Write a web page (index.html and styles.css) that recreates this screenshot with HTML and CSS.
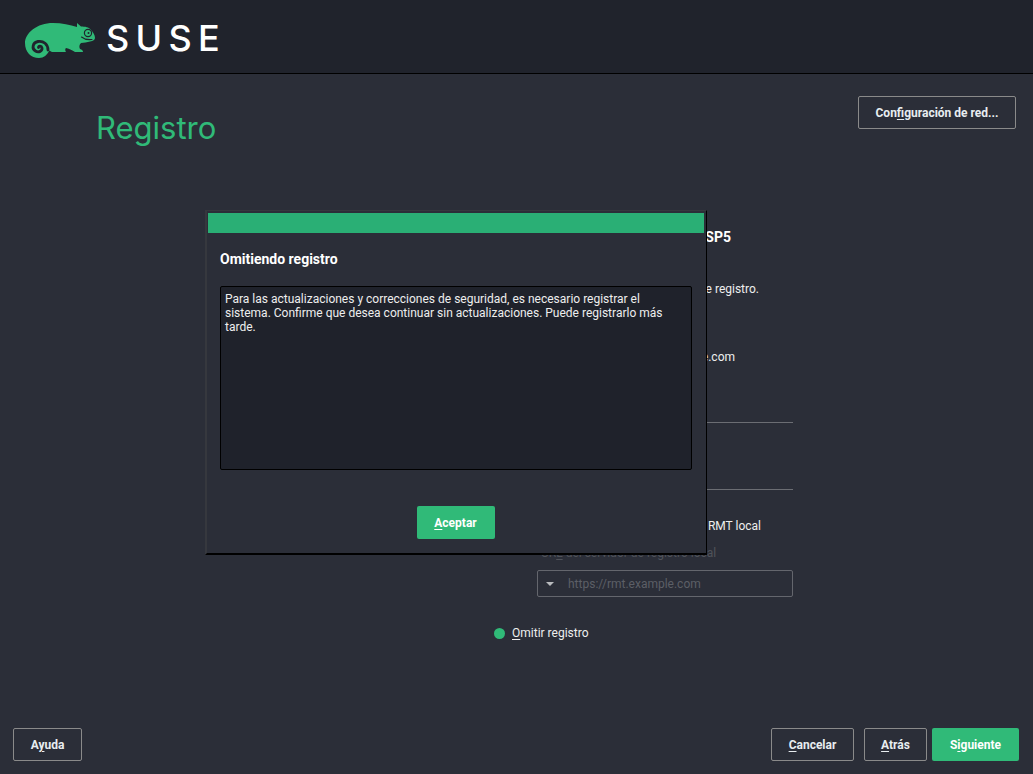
FILE: index.html
```html
<!DOCTYPE html>
<html lang="es">
<head>
<meta charset="utf-8">
<title>Registro</title>
<link rel="stylesheet" href="styles.css">
</head>
<body>
<header class="topbar">
  <svg class="logo" width="72" height="37" viewBox="25 22 72 37" aria-hidden="true">
    <path class="logo-body" d="M25 43C25 33 37 23 53 23C62 23 70 25 77 27L77 23L81 26.5C85 26.5 89 27 91 30C93 32 95 35 95 38C95 40 93 41 90 41.5C87 42.5 84 42.5 81 43C79 45 79 47 80 49C82 49.5 83 50.5 83 52L75 52C72 50.5 70 48.5 66 48C65 49 65 50.5 66 52L52 52C51 51.5 50 51 49.5 50.5C47 55 44 58 39 58C31 58 25 52 25 43Z"/>
    <path class="logo-cut" d="M38.5 47.5C38.5 45.5 41.5 45.5 42 48C42.5 51 38.5 53 35.5 51C31.5 48.5 32.5 42.5 38 41.5C43.5 40.5 48 44.5 48 50"/>
    <circle class="logo-eye" cx="88" cy="33" r="3.6"/>
    <circle class="logo-pupil" cx="88.5" cy="33" r="1"/>
    <path class="logo-mouth" d="M81.5 37C84 39 88 40 92 39.5"/>
  </svg>
  <span class="wordmark">SUSE</span>
</header>

<main class="content">
  <div class="title-row">
    <h1 class="title">Registro</h1>
    <button class="btn btn-outline btn-network">Con<u>f</u>iguración de red...</button>
  </div>
  <section class="form">
    <h2 class="product">SUSE Linux Enterprise Server 15 SP5</h2>
    <p class="line line-method">Código de registro.</p>
    <p class="line line-mail">correo@example.com</p>
    <hr class="rule rule-first">
    <hr class="rule rule-second">
    <p class="line line-rmt">Registrar el sistema mediante servidor RMT local</p>
    <label class="url-label">UR<u>L</u> del servidor de registro local</label>
    <div class="combo">
      <span class="combo-arrow"></span>
      <span class="combo-text">https://rmt.example.com</span>
    </div>
    <div class="skip">
      <span class="radio"></span>
      <span class="skip-text"><u>O</u>mitir registro</span>
    </div>
  </section>
</main>

<footer class="footer">
  <button class="btn btn-outline btn-help">A<u>y</u>uda</button>
  <div class="footer-right">
    <button class="btn btn-outline btn-cancel"><u>C</u>ancelar</button>
    <button class="btn btn-outline btn-back"><u>A</u>trás</button>
    <button class="btn btn-primary btn-next">S<u>i</u>guiente</button>
  </div>
</footer>

<div class="dialog" role="dialog">
  <div class="dialog-bar"></div>
  <h3 class="dialog-title">Omitiendo registro</h3>
  <div class="dialog-text">Para las actualizaciones y correcciones de seguridad, es necesario registrar el sistema. Confirme que desea continuar sin actualizaciones. Puede registrarlo más tarde.</div>
  <div class="dialog-actions">
    <button class="btn btn-primary btn-ok"><u>A</u>ceptar</button>
  </div>
</div>
</body>
</html>
```

FILE: styles.css
```css
* { box-sizing: border-box; }
html, body { height: 100%; }
body {
  margin: 0;
  height: 774px;
  overflow: hidden;
  position: relative;
  display: flex;
  flex-direction: column;
  background: #2b2e38;
  color: #eeeeee;
  font-family: Roboto, "Liberation Sans", sans-serif;
  font-size: 12px;
}
u { text-underline-offset: 2px; text-decoration-thickness: 1px; }

.topbar {
  height: 74px;
  flex: none;
  display: flex;
  align-items: flex-start;
  background: #20232c;
  border-bottom: 1px solid #000;
  padding: 22px 0 0 25px;
}
.logo { display: block; }
.logo-body { fill: #30ba78; }
.logo-cut { fill: none; stroke: #20232c; stroke-width: 2.8; stroke-linecap: round; }
.logo-eye { fill: #30ba78; stroke: #20232c; stroke-width: 1.2; }
.logo-pupil { fill: #20232c; }
.logo-mouth { fill: none; stroke: #20232c; stroke-width: 1.1; stroke-linecap: round; }
.wordmark {
  margin: -6px 0 0 9px;
  font-family: Inter, sans-serif;
  font-weight: 500;
  font-size: 36px;
  line-height: 44px;
  letter-spacing: 6.3px;
  color: #fff;
}

.content { flex: 1; min-height: 0; display: flex; flex-direction: column; }
.title-row {
  display: flex;
  justify-content: space-between;
  align-items: flex-start;
  padding: 22px 17px 0 96px;
}
.title {
  margin: 12px 0 0;
  font-family: Inter, sans-serif;
  font-weight: 400;
  font-size: 31px;
  line-height: 40px;
  color: #30ba78;
}

.btn {
  height: 33px;
  padding: 0;
  border-radius: 2px;
  font-family: Roboto, "Liberation Sans", sans-serif;
  font-size: 12px;
  font-weight: 700;
  cursor: pointer;
}
.btn-outline { background: transparent; border: 1px solid #8a8a8a; color: #e8edf0; }
.btn-primary { background: #30ba78; border: 0; color: #fff; }
.btn-network { width: 158px; }
.btn-help { width: 69px; }
.btn-cancel { width: 83px; margin-right: 5px; }
.btn-back { width: 63px; }
.btn-next { width: 87px; }
.btn-ok { width: 78px; }

.form { position: relative; flex: 1; padding-left: 537px; padding-right: 240px; }
.product {
  margin: 80px -62px 0 -300px;
  padding-right: 124px;
  text-align: right;
  font-size: 14px;
  line-height: 18px;
  font-weight: 700;
  color: #fff;
}
.line { margin: 0; line-height: 14px; white-space: nowrap; color: #eeeeee; }
.line-method { margin: 36px 34px 0 -300px; text-align: right; }
.line-mail { margin: 54px 58px 0 -300px; text-align: right; }
.rule { margin: 0; border: 0; height: 1px; background: #6b6d73; }
.rule-first { margin-top: 58px; }
.rule-second { margin-top: 66px; }
.line-rmt { margin: 29px -32px 0 -300px; text-align: right; padding-right: 64px; }
.url-label { display: block; margin: 13px 0 0 4px; line-height: 14px; color: #50535a; white-space: nowrap; }
.combo {
  display: flex;
  align-items: center;
  height: 27px;
  margin-top: 10px;
  border: 1px solid #64666d;
  border-radius: 2px;
}
.combo-arrow {
  width: 0; height: 0;
  margin-left: 8px;
  border-left: 4px solid transparent;
  border-right: 4px solid transparent;
  border-top: 4px solid #b9bbbe;
}
.combo-text { margin-left: 14px; color: #5c5f66; }
.skip { display: flex; align-items: center; margin: 29px 0 0 -43px; height: 14px; white-space: nowrap; }
.radio { width: 11px; height: 11px; border-radius: 50%; background: #30ba78; }
.skip-text { margin-left: 7px; }

.footer {
  flex: none;
  display: flex;
  justify-content: space-between;
  padding: 0 14px 13px 13px;
}
.footer-right { display: flex; gap: 5px; }

.dialog {
  position: absolute;
  left: 205px;
  top: 210px;
  width: 502px;
  height: 345px;
  display: flex;
  flex-direction: column;
  background: #2b2e38;
  border-style: solid;
  border-color: #36383e #000 #000 #36383e;
  border-width: 1px 1px 2px 2px;
  padding: 2px 0 0 1px;
}
.dialog-bar { height: 20px; flex: none; background: #2aaf75; margin-right: 2px; }
.dialog-title {
  margin: 17px 0 0 12px;
  font-size: 14px;
  line-height: 18px;
  font-weight: 700;
  color: #fff;
}
.dialog-text {
  margin: 18px 14px 0 12px;
  height: 184px;
  padding: 5px 4px;
  background: #1f222b;
  border: 1px solid #000;
  border-radius: 2px;
  line-height: 14px;
  color: #eeeeee;
}
.dialog-actions { display: flex; justify-content: center; margin-top: 36px; padding-right: 3px; }
```
